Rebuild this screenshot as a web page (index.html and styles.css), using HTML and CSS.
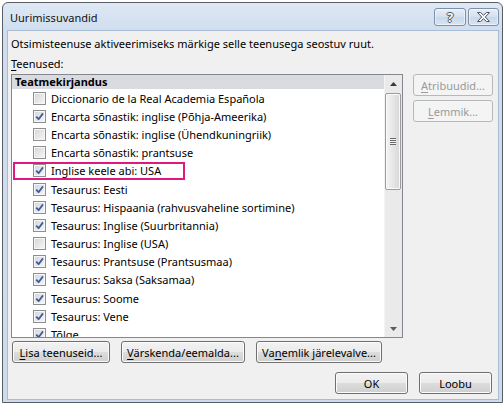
FILE: index.html
```html
<!DOCTYPE html>
<html lang="et">
<head>
    <meta charset="UTF-8">
    <title>Uurimissuvandid</title>
    <link rel="stylesheet" href="styles.css">
</head>
<body>
    <svg class="defs" width="0" height="0">
        <symbol id="tick" viewBox="0 0 11 11">
            <path d="M2.2 5.6 L4.6 8.2 L9 2.4" fill="none" stroke="#3f5c98" stroke-width="1.8" stroke-linejoin="round"/>
        </symbol>
    </svg>

    <div class="window">
        <div class="titlebar">
            <span class="title">Uurimissuvandid</span>
            <div class="caption">
                <span class="cap-btn help">?</span>
                <span class="cap-btn close">
                    <svg width="13" height="10" viewBox="0 0 13 10">
                        <polygon points="0.5,0.5 3.5,0.5 6.5,3.2 9.5,0.5 12.5,0.5 8.3,5 12.5,9.5 9.5,9.5 6.5,6.8 3.5,9.5 0.5,9.5 4.7,5" fill="#f7f9fc" stroke="#4c5564" stroke-width="1"/>
                    </svg>
                </span>
            </div>
        </div>

        <div class="client">
            <p class="intro">Otsimisteenuse aktiveerimiseks märkige selle teenusega seostuv ruut.</p>
            <p class="label"><u>T</u>eenused:</p>

            <div class="main-row">
                <div class="listbox">
                    <div class="list">
                        <div class="group">Teatmekirjandus</div>
                        <div class="item"><span class="check"></span>Diccionario de la Real Academia Española</div>
                        <div class="item"><span class="check"><svg><use href="#tick"/></svg></span>Encarta sõnastik: inglise (Põhja-Ameerika)</div>
                        <div class="item"><span class="check"></span>Encarta sõnastik: inglise (Ühendkuningriik)</div>
                        <div class="item"><span class="check"></span>Encarta sõnastik: prantsuse</div>
                        <div class="item marked"><span class="check"><svg><use href="#tick"/></svg></span>Inglise keele abi: USA</div>
                        <div class="item"><span class="check"><svg><use href="#tick"/></svg></span>Tesaurus: Eesti</div>
                        <div class="item"><span class="check"><svg><use href="#tick"/></svg></span>Tesaurus: Hispaania (rahvusvaheline sortimine)</div>
                        <div class="item"><span class="check"><svg><use href="#tick"/></svg></span>Tesaurus: Inglise (Suurbritannia)</div>
                        <div class="item"><span class="check"></span>Tesaurus: Inglise (USA)</div>
                        <div class="item"><span class="check"><svg><use href="#tick"/></svg></span>Tesaurus: Prantsuse (Prantsusmaa)</div>
                        <div class="item"><span class="check"><svg><use href="#tick"/></svg></span>Tesaurus: Saksa (Saksamaa)</div>
                        <div class="item"><span class="check"><svg><use href="#tick"/></svg></span>Tesaurus: Soome</div>
                        <div class="item"><span class="check"><svg><use href="#tick"/></svg></span>Tesaurus: Vene</div>
                        <div class="item"><span class="check"><svg><use href="#tick"/></svg></span>Tõlge</div>
                    </div>
                    <div class="scrollbar">
                        <div class="sb-arrow">
                            <svg width="7" height="4" viewBox="0 0 7 4"><path d="M0 4 L3.5 0 L7 4 Z" fill="#3a3a3a"/></svg>
                        </div>
                        <div class="sb-track">
                            <div class="sb-thumb"><span class="grip"></span></div>
                        </div>
                        <div class="sb-arrow">
                            <svg width="7" height="4" viewBox="0 0 7 4"><path d="M0 0 L7 0 L3.5 4 Z" fill="#5a5a5a"/></svg>
                        </div>
                    </div>
                </div>
                <div class="side">
                    <button class="btn" disabled><u>A</u>tribuudid...</button>
                    <button class="btn" disabled><u>L</u>emmik...</button>
                </div>
            </div>

            <div class="tools">
                <button class="btn w-add"><u>L</u>isa teenuseid...</button>
                <button class="btn w-refresh"><u>V</u>ärskenda/eemalda...</button>
                <button class="btn w-parent">Va<u>n</u>emlik järelevalve...</button>
            </div>

            <div class="footer">
                <button class="btn w-dlg">OK</button>
                <button class="btn w-dlg">Loobu</button>
            </div>
        </div>
    </div>
</body>
</html>
```

FILE: styles.css
```css
* {
    margin: 0;
    padding: 0;
    box-sizing: border-box;
}
body {
    background: #fff;
    font-family: "Noto Sans", sans-serif;
    font-size: 11px;
    line-height: 15px;
    color: #000;
}
.defs {
    position: absolute;
}
u {
    text-underline-offset: 2px;
}

/* window frame */
.window {
    width: 501px;
    height: 401px;
    margin: 2px 0 0 2px;
    border: 1px solid #595e66;
    border-radius: 6px 6px 0 0;
    background: linear-gradient(#dfe9f5, #cfddee 28px, #cddbec);
    padding: 0 3px 2px 4px;
    display: flex;
    flex-direction: column;
}
.titlebar {
    height: 27px;
    display: flex;
    justify-content: space-between;
    align-items: flex-start;
}
.title {
    padding: 7px 0 0 3px;
    color: #111;
}
.caption {
    display: flex;
    gap: 2px;
    margin-top: 5px;
}
.cap-btn {
    height: 18px;
    border: 1px solid #7d8fa6;
    border-radius: 3px;
    background: linear-gradient(#e6eef8, #d3e0ef 50%, #c8d7ea 50%, #d6e3f2);
    box-shadow: inset 0 0 0 1px rgba(255,255,255,0.5);
    display: flex;
    align-items: center;
    justify-content: center;
}
.help {
    width: 32px;
    font-size: 13px;
    font-weight: bold;
    color: #f7f9fc;
    text-shadow: 1px 0 #4c5564, -1px 0 #4c5564, 0 1px #4c5564, 0 -1px #4c5564;
}
.close {
    width: 31px;
}

/* client area */
.client {
    flex: 1;
    border: 1px solid #a8bcd4;
    background: #f0f0f0;
    padding: 5px 5px 0 3px;
}
.label {
    margin-top: 5px;
}
.main-row {
    display: flex;
    gap: 10px;
    margin-top: 3px;
}
.listbox {
    width: 392px;
    height: 264px;
    border: 1px solid #828790;
    background: #fff;
    display: flex;
}
.list {
    flex: 1;
    overflow: hidden;
}
.group {
    height: 14px;
    line-height: 14px;
    padding-left: 3px;
    font-weight: bold;
    background: #dadbe0;
}
.item {
    height: 18.2px;
    display: flex;
    align-items: center;
    gap: 5px;
    padding-left: 21px;
    white-space: nowrap;
}
.item.marked {
    width: 172px;
    margin-left: 1px;
    padding-left: 20px;
    box-shadow: inset 0 0 0 2px #e0187f;
}
.check {
    width: 13px;
    height: 13px;
    flex: none;
    border: 1px solid #8e8f8f;
    background: linear-gradient(135deg, #d3d5d9, #f7f7f7);
    box-shadow: inset 0 0 0 1px #f6f6f6;
    display: flex;
    align-items: center;
    justify-content: center;
}
.check svg {
    width: 11px;
    height: 11px;
}

/* scrollbar */
.scrollbar {
    width: 18px;
    display: flex;
    flex-direction: column;
    background: #eaeaea;
    border-left: 1px solid #f4f4f4;
}
.sb-arrow {
    height: 17px;
    display: flex;
    align-items: center;
    justify-content: center;
}
.sb-track {
    flex: 1;
    padding-top: 1px;
}
.sb-thumb {
    height: 97px;
    margin: 0 1px 0 0;
    border: 1px solid #9b9b9b;
    border-radius: 2px;
    background: linear-gradient(90deg, #f4f4f4, #e6e6e6 50%, #d6d6d6);
    box-shadow: inset 0 0 0 1px #fafafa;
    display: flex;
    align-items: center;
    justify-content: center;
}
.grip {
    width: 6px;
    height: 7px;
    background: repeating-linear-gradient(#6a6a6a 0 1px, #f2f2f2 1px 2px);
}

/* buttons */
.btn {
    height: 22px;
    border: 1px solid #707070;
    border-radius: 3px;
    background: linear-gradient(#f2f2f2, #ebebeb 50%, #dddddd 50%, #cfcfcf);
    box-shadow: inset 0 0 0 1px #fbfbfb;
    font: inherit;
    color: #000;
    text-align: center;
}
.btn:disabled {
    border-color: #b5b9bc;
    background: #f4f4f4;
    box-shadow: none;
    color: #9a9a9a;
}
.side {
    width: 80px;
    display: flex;
    flex-direction: column;
    gap: 4px;
}
.tools {
    display: flex;
    gap: 11px;
    margin: 3px 0 0 1px;
}
.w-add {
    width: 98px;
}
.w-refresh {
    width: 124px;
}
.w-parent {
    width: 126px;
}
.footer {
    display: flex;
    justify-content: flex-end;
    gap: 11px;
    margin-top: 9px;
    padding-right: 1px;
}
.w-dlg {
    width: 73px;
}
```
